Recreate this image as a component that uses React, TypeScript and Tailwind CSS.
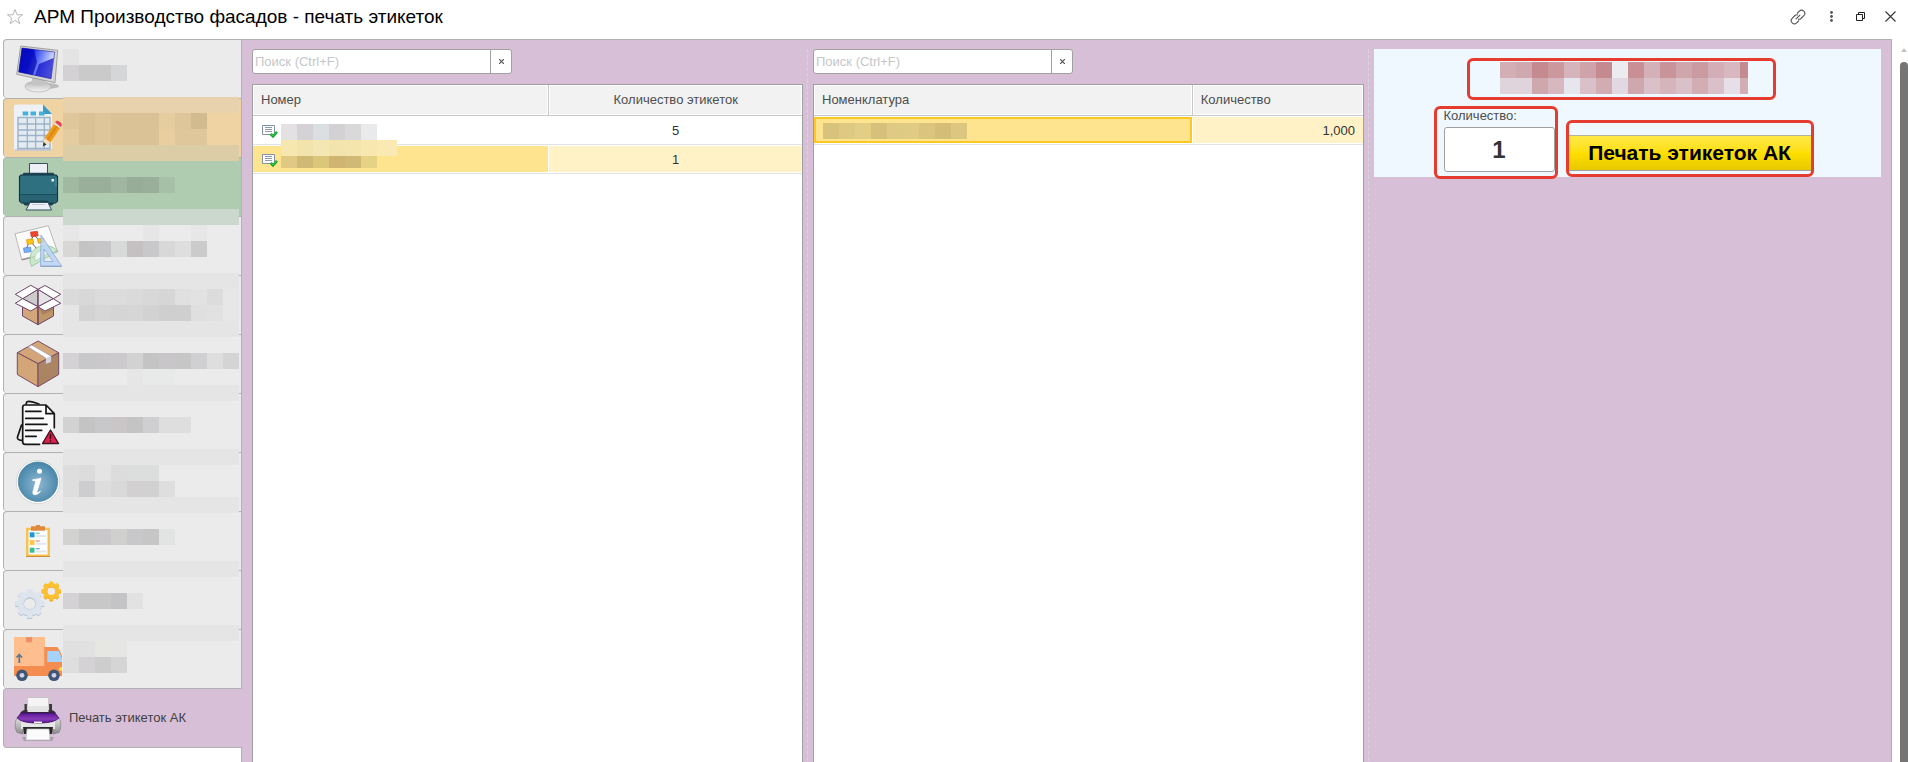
import { useState, type ReactNode } from 'react';
import clsx from 'clsx';

/* ---------- Sidebar icons ---------- */

function Icon({ children }: { children: ReactNode }) {
  return (
    <svg className="h-12 w-12 shrink-0" viewBox="0 0 48 48" fill="none" aria-hidden="true">
      {children}
    </svg>
  );
}

function MonitorIcon() {
  return (
    <Icon>
      <defs>
        <linearGradient id="screen" x1="0" y1="0" x2="1" y2="0.3">
          <stop offset="0" stopColor="#0a0ad8" />
          <stop offset="0.4" stopColor="#1022ff" />
          <stop offset="0.5" stopColor="#3a50f4" />
          <stop offset="1" stopColor="#dfe6ff" />
        </linearGradient>
        <linearGradient id="stand" x1="0" y1="0" x2="0" y2="1">
          <stop offset="0" stopColor="#b4b4b4" />
          <stop offset="1" stopColor="#f4f4f4" />
        </linearGradient>
      </defs>
      <ellipse cx="32" cy="41" rx="13" ry="3" fill="#9b9b9b" opacity="0.6" />
      <ellipse cx="24" cy="41.5" rx="13" ry="5.5" fill="url(#stand)" stroke="#a8a8a8" strokeWidth="0.6" />
      <path d="M18 33h13l1 6c-4 2-11 2-14 0z" fill="#c4c4c4" />
      <path d="M6.7 1l37 4.3-2.7 32.4-38.3-8.4z" fill="#d6d6d6" stroke="#8f8f8f" strokeWidth="0.8" />
      <path d="M8 3l32.7 4-3.7 26.7L4.7 27z" fill="url(#screen)" stroke="#22228a" strokeWidth="0.6" />
      <path d="M8 3l12 1.5L23 17l-4 13-14.300-3z" fill="#0505a8" opacity="0.65" />
      <path d="M25 19l14.500-6-2.500 20.700-16-3.400z" fill="#0707c8" opacity="0.7" />
    </Icon>
  );
}

function SheetIcon() {
  return (
    <Icon>
      <path d="M2 0.500h27l9 9.500v35a2 2 0 0 1-2 2H2a2 2 0 0 1-2-2v-42.500a2 2 0 0 1 2-2z" fill="#eef1f5" />
      <path d="M1 46h36.500" stroke="#c8ccd2" strokeWidth="2" />
      <path d="M29 0.500l9 9.500h-9z" fill="#3a9cc6" />
      <path d="M8.700 7.500h5.500v4h-5.500zM16.500 7.500H22v4h-5.500zM25 7.500h5.500v4H25z" fill="#42b1de" />
      <path d="M4 13.500h32v31H4z" fill="#e3ebf2" stroke="#9db2c8" strokeWidth="1.400" />
      <path d="M13.300 13.500v31M21.700 13.500v31M30.300 13.500v31M4 20h32M4 26h32M4 31.500h32M4 37.500h32" stroke="#9db2c8" strokeWidth="1.300" />
      <path d="M30.500 34l9.500-14 6 4-9.500 14.500z" fill="#f09a1c" />
      <path d="M33.500 36l9.500-14" stroke="#d88410" strokeWidth="1.500" />
      <path d="M30.500 34l6 4.500-7.500 3.500z" fill="#f6dcb8" />
      <path d="M29.500 38l3 2.500-3.700 2z" fill="#30302f" />
      <path d="M40 20l1-1.700 6 4-1 1.700z" fill="#dfe3e8" />
      <path d="M41 18.300c1-1.800 2.500-2 4-1s3.500 2.500 2.500 4.700l-.8 1z" fill="#e5444e" />
    </Icon>
  );
}

function PlotterIcon() {
  return (
    <Icon>
      <path d="M15.500 0.500h18v12h-18z" fill="#ecf0f6" stroke="#34505f" strokeWidth="1" />
      <path d="M9.500 9.800h30l1.500 3H8z" fill="#1d4656" />
      <path d="M7 12h35l1.500 1.500v24.500l-2 2H7.500l-2-2V13.500z" fill="#2f7080" stroke="#143445" strokeWidth="1.200" />
      <path d="M6 31.500h37v6l-2 2.500H8l-2-2.500z" fill="#286273" />
      <path d="M6 31.500h37" stroke="#1c4d5d" />
      <path d="M8 39.500h33l-3 3H11z" fill="#17404f" />
      <path d="M16 37.500h18l1 2H15z" fill="#17404f" />
      <path d="M16 39.500h18l3.500 7.500H12z" fill="#ecf0f6" stroke="#34505f" strokeWidth="1" />
      <path d="M18 41.500h13" stroke="#c0cad8" />
      <path d="M37.500 16h2.500v2.500h-2.500z" fill="#e6f4f8" />
      <path d="M42 15v8" stroke="#5895a5" />
    </Icon>
  );
}

function DesignIcon() {
  return (
    <Icon>
      <path d="M1 11.700l33.300-8 9 25.300-35.600 8.300z" fill="#fbfbfb" stroke="#b9b9b9" />
      <path d="M7.700 37.800l36-8.500" stroke="#8d8d8d" strokeWidth="1.200" />
      <path d="M20 13l-4 7M20 13l6 6M15 20l-3 8M17 20l6 7" stroke="#555" strokeWidth="0.900" />
      <path d="M16.500 10l7-.8.700 4.800-7 .8z" fill="#f3452a" stroke="#c8341c" strokeWidth="0.600" />
      <path d="M12.500 17.700l6.500-.7.700 4.600-6.500.8z" fill="#ffc20e" stroke="#c99206" strokeWidth="0.600" />
      <path d="M23.500 16.800l6-.6.600 4.400-6 .6z" fill="#ffc20e" stroke="#c99206" strokeWidth="0.600" />
      <path d="M9.500 26l7-.8.700 4.600-7 .8z" fill="#7ab0f5" stroke="#3f78c8" strokeWidth="0.600" />
      <path d="M17.500 44.500c-4-9 0-17 7-19.500s15-1 19 4z" fill="#c5e6c5" fillOpacity="0.800" stroke="#8fc490" strokeWidth="0.800" />
      <path d="M21 39c-1-5 1-9 5-10s8-.5 10 1.500z" fill="#f4f8f4" stroke="#9bcb9c" strokeWidth="0.600" />
      <path fillRule="evenodd" d="M27 13l20.500 31H26.500zM30 27v12.500h9z" fill="#bcd3f4" fillOpacity="0.850" stroke="#85a9dc" strokeWidth="0.800" />
      <path d="M26.500 44.500h21" stroke="#8da6c6" />
    </Icon>
  );
}

function OpenBoxIcon() {
  return (
    <Icon>
      <g stroke="#6e4769" strokeWidth="1" strokeLinejoin="round">
        <path d="M8.500 20L24 25.700v18L8.500 35z" fill="#d2a679" />
        <path d="M39.500 20L24 25.700v18L39.500 35z" fill="#bf956a" />
        <path d="M8.700 17.700L24 8.300v17.400z" fill="#cbcbcb" />
        <path d="M39.300 17.700L24 8.300v17.400z" fill="#e4e4e4" />
        <path d="M1.300 13.300l15.400-9L24 8.300 8.700 17.700z" fill="#fff" />
        <path d="M31 4.500l15.700 8.800-7.400 4.400L24 8.300z" fill="#fff" />
        <path d="M8.700 17.700l-7.400 4.600L16.700 30 24 25.700z" fill="#fff" />
        <path d="M39.300 17.700l7.400 4.600L31 30l-7-4.300z" fill="#fff" />
        <path d="M24 8.300v35" />
      </g>
      <path d="M24.500 27l6.500 4 8-4v2l-10 5z" fill="#9c7752" opacity="0.600" />
    </Icon>
  );
}

function ClosedBoxIcon() {
  return (
    <Icon>
      <g stroke="#7b4a68" strokeWidth="1" strokeLinejoin="round">
        <path d="M24 1l20.700 11.700L24 23.700 3.300 12.700z" fill="#d2a679" />
        <path d="M3.300 12.700L24 23.700v23L3.300 34.500z" fill="#d2a679" />
        <path d="M44.700 12.700L24 23.700v23l20.700-12.200z" fill="#ab8562" />
        <path d="M14 7l3.700-2L37 16v5.700l-5 2v-5.400z" fill="#fff" stroke="#a995ae" strokeWidth="0.800" />
      </g>
      <path d="M32 18.300l5-2.300v5.700l-5 2z" fill="#d2d2e0" />
    </Icon>
  );
}

function DocsIcon() {
  return (
    <Icon>
      <g stroke="#161616" strokeWidth="1.700" strokeLinecap="round" strokeLinejoin="round">
        <path d="M12 5l1-2.300c3-1.200 8 1 12 2.300M7.500 26L3.500 38c-.5 2 1 3.300 4 3.300" />
        <path d="M25 45.300H11a2.300 2.300 0 0 1-2.300-2.300V8.300A2.300 2.300 0 0 1 11 6h21l8.300 8.700v14L30 45z" fill="#fafafa" stroke="none" />
        <path d="M25.500 45.300H11a2.300 2.300 0 0 1-2.300-2.300V8.300A2.300 2.300 0 0 1 11 6h21l8.300 8.700v14M32 6v8.700h8.300" />
        <path d="M11.700 12.300H27M11.700 19.300h17.600M11.700 25.300H33M11.700 31.300h16M11.700 37.300h10.500" />
        <path d="M36.500 31l8 13.500H28.500z" fill="#e0204c" stroke="#3a1420" strokeWidth="1.400" />
        <path d="M36.500 35.500v4M36.500 42v.300" stroke="#2a0a12" strokeWidth="1.500" />
      </g>
    </Icon>
  );
}

function InfoIcon() {
  return (
    <Icon>
      <defs>
        <radialGradient id="info" cx="0.5" cy="0.55" r="0.55">
          <stop offset="0" stopColor="#8fb8d2" />
          <stop offset="1" stopColor="#4585a9" />
        </radialGradient>
      </defs>
      <circle cx="24" cy="24" r="21.700" fill="#fff" stroke="#d2d2d2" strokeWidth="0.800" />
      <circle cx="24" cy="23.700" r="19.700" fill="url(#info)" stroke="#5686a0" strokeWidth="0.800" />
      <circle cx="25.500" cy="13.200" r="2.500" fill="#fff" />
      <path
        d="M18.700 21.700c3-.2 5.300-.8 8.300-1.500l-4 13.300c-.4 1.700.7 1.700 3.500-.5-1.500 2.700-3.700 3.700-5.500 3.700-2 0-2.500-1.300-2-3.200l2.700-9.500c.3-1-.4-1.300-3-1.500z"
        fill="#fff"
        stroke="#fff"
        strokeWidth="0.800"
      />
    </Icon>
  );
}

function ClipboardIcon() {
  return (
    <Icon>
      <path d="M12 10.700h24V40H12z" fill="#f9c152" />
      <path d="M12 39h24v1H12z" fill="#d08b3a" />
      <path d="M14.500 13h19v24.500h-19z" fill="#fdfdfd" />
      <path d="M17 9.300h5V8h4v1.300h5v4.500H17z" fill="#de8a41" />
      <path d="M15.700 15.300h4.800v5h-4.800z" fill="#1e96d8" />
      <path d="M15.700 23h4.800v5h-4.800z" fill="#f9c94c" />
      <path d="M15.700 30.700h4.800v5h-4.800z" fill="#3abf95" />
      <path d="M21.700 16.300h4" stroke="#62cfae" strokeWidth="1.200" />
      <path d="M21.700 24h4" stroke="#ef8781" strokeWidth="1.200" />
      <path d="M21.700 31.700h4" stroke="#52abd8" strokeWidth="1.200" />
      <path d="M21.700 19h10.500M21.700 26.700h10.500M21.700 34.500h10.500" stroke="#e2e7ed" strokeWidth="2" />
    </Icon>
  );
}

const TEETH = [0, 45, 90, 135, 180, 225, 270, 315];

function GearsIcon() {
  return (
    <Icon>
      <g transform="translate(15.7 28.500)" stroke="#b7c2d0">
        <circle r="9" strokeWidth="6" />
        {TEETH.map((a) => (
          <path key={a} d="M0-11v-3.500" strokeWidth="5" transform={`rotate(${a})`} />
        ))}
      </g>
      <g transform="translate(15.7 27.500)" stroke="#dde4ee">
        <circle r="9" strokeWidth="6" />
        {TEETH.map((a) => (
          <path key={a} d="M0-11v-3.500" strokeWidth="5" transform={`rotate(${a})`} />
        ))}
      </g>
      <circle cx="15.700" cy="27.500" r="6" stroke="#c3ccd8" strokeWidth="0.700" />
      <g transform="translate(37.300 15.700)" stroke="#ea9a2a">
        <circle r="6" strokeWidth="3.800" />
        {TEETH.map((a) => (
          <path key={a} d="M0-7v-2.700" strokeWidth="3.500" transform={`rotate(${a})`} />
        ))}
      </g>
      <g transform="translate(37.300 15)" stroke="#fdc02f">
        <circle r="6" strokeWidth="4" />
        {TEETH.map((a) => (
          <path key={a} d="M0-7v-2.500" strokeWidth="3.500" transform={`rotate(${a})`} />
        ))}
      </g>
    </Icon>
  );
}

function TruckIcon() {
  return (
    <Icon>
      <path d="M0 2h31v29H0z" fill="#ffbe8e" />
      <path d="M12 2h6v5.300h-6z" fill="#ea9166" />
      <path d="M30.300 12h13L46 16l2 5v20H0V31h30.300z" fill="#f58d50" />
      <path d="M33.300 16h11.500L48 24v3H33.300z" fill="#a5d3fd" />
      <path d="M47 32h1v4h-1a2 2 0 0 1 0-4z" fill="#ffe03c" />
      <path d="M5.300 28v-7M2.500 22.500l2.800-3 2.800 3" stroke="#64788f" strokeWidth="1.800" />
      <circle cx="8" cy="40.300" r="5.800" fill="#3f5674" />
      <circle cx="8" cy="40.300" r="2.400" fill="#cfd0ea" />
      <circle cx="40" cy="40.300" r="5.800" fill="#3f5674" />
      <circle cx="40" cy="40.300" r="2.400" fill="#cfd0ea" />
    </Icon>
  );
}

function PrinterIcon() {
  return (
    <Icon>
      <defs>
        <linearGradient id="lid" x1="0" y1="0" x2="0" y2="1">
          <stop offset="0" stopColor="#571690" />
          <stop offset="0.6" stopColor="#8a3cba" />
          <stop offset="1" stopColor="#571690" />
        </linearGradient>
        <linearGradient id="metal" x1="0" y1="0" x2="0" y2="1">
          <stop offset="0" stopColor="#f3f3f3" />
          <stop offset="1" stopColor="#8b8b8b" />
        </linearGradient>
      </defs>
      <path d="M10.500 10h3v8h-3zM35 10h3v8h-3z" fill="#3a3a3a" />
      <path d="M13.300 3.500h21.400V19H13.300z" fill="#f4f4f4" stroke="#bdbdbd" strokeWidth="0.800" />
      <path d="M6 19c2-2.500 4-3 6-3h24c2 0 4 .5 6 3z" fill="#333" />
      <path d="M13.500 12h21v6h-21z" fill="#e4e4e4" />
      <path d="M6 21l-4 5c-1.500 4-1 9 1 12.500l6 1.500V27zM42 21l4 5c1.500 4 1 9-1 12.500L39 40V27z" fill="url(#metal)" stroke="#777" strokeWidth="0.600" />
      <path d="M7 27h34v8H7z" fill="#e6e6e6" />
      <path d="M9 33h30l-1 7H10z" fill="#2a2a2a" />
      <path d="M3 24l4-5h34l4 5c-3 3-8 4-11 4.500-6 .7-14 .7-20 0-3-.5-8-1.500-11-4.500z" fill="url(#lid)" stroke="#380a60" strokeWidth="0.700" />
      <path d="M20 28.300h8" stroke="#f6f6f6" strokeWidth="1.500" />
      <path d="M8 43h32l-2 4H10z" fill="#888" opacity="0.600" />
      <path d="M13 35h22l1 11H12z" fill="#fbfbfb" stroke="#bcbcbc" strokeWidth="0.700" />
    </Icon>
  );
}

/* ---------- Censored text ---------- */

type Cell = string | null;

function Mosaic({ rows, className }: { rows: Cell[][]; className?: string }) {
  return (
    <div className={clsx('pointer-events-none', className)} aria-hidden="true">
      {rows.map((row, y) => (
        <div key={y} className="flex h-4">
          {row.map((color, x) => (
            <span key={x} className="h-4 w-4 shrink-0" style={{ backgroundColor: color ?? 'transparent' }} />
          ))}
        </div>
      ))}
    </div>
  );
}

const band = (color: string): Cell[] => Array(11).fill(color);
const none: Cell[] = [];

const SIDEBAR_MOSAIC: Cell[][] = [
  ['#e4e4e4'],
  ['#d4d1d4', '#cacaca', '#cacaca', '#d5d6d8'],
  none,
  band('#e8d2ae'),
  ['#dfc79b', '#dac196', '#dec69a', '#dbc296', '#dbc296', '#dbc296', '#e6cda0', '#dfc69a', '#d3bb90'],
  ['#e4cba0', '#dac296', '#dfc69a', '#dbc296', '#dbc296', '#dbc296', '#e9ce9f', '#e0c79b', '#e0c79b'],
  band('#dccda7'),
  none,
  ['#a1b8a1', '#99af9a', '#99af9a', '#a0b6a1', '#98ad98', '#99af9a', '#a6bfa7'],
  none,
  band('#ccd8ce'),
  ['#e7e7e8', null, null, null, null, '#e6e6e7', null, null, '#e7e7e7'],
  ['#d9d7d5', '#c4c4c5', '#c6c6c8', '#d8dada', '#c5c1c3', '#c8c8cb', '#d8d8d8', '#dedede', '#cbcbcb'],
  none,
  band('#e5e5e5'),
  ['#dadada', '#d8d8d8', '#dcdcdc', '#dcdcdc', '#dadada', '#d8d8d8', '#d6d6d6', '#e0e0e0', '#e2e2e2', '#dcdcdc', '#e7e7e7'],
  ['#e5e5e5', '#d3d3d3', '#d7d7d7', '#d5d5d5', '#d6d6d6', '#d2d2d2', '#cfcfcf', '#cfcfcf', '#dfdfdf', '#e1e1e1', '#e7e7e7'],
  band('#e5e5e5'),
  none,
  ['#d4d2d4', '#c8c8ca', '#cac8cb', '#cdcacd', '#d2d2d2', '#c4c4c4', '#c8c6c8', '#c6c6c6', '#d0d0d2', '#dedede', '#d4d4d4'],
  [null, null, null, null, '#e6e6e6', '#e8eaea', '#e8eaea'],
  band('#e5e5e5'),
  none,
  ['#d2d2d2', '#c4c4c4', '#c8c8ca', '#cac6c8', '#c4c4c4', '#cfcfd1', '#dedede', '#dedede'],
  none,
  band('#e5e5e5'),
  ['#dedede', '#dcdcdc', '#e4e4e4', '#dcdcdd', '#dcdede', '#dcdede'],
  ['#dedede', '#cdcdcf', '#dddddd', '#d9d9da', '#d3d0d2', '#d1d1d1', '#dedede'],
  band('#e5e5e5'),
  none,
  ['#d2d2d0', '#c8c8c8', '#cac8cb', '#d0d0ce', '#c8c8ca', '#c6c6c6', '#e2e4e3'],
  none,
  band('#e5e5e5'),
  none,
  ['#d4d2d4', '#c8c8c8', '#c8c8c8', '#c4c4c6', '#e2e2e2'],
  none,
  band('#e5e5e5'),
  ['#e0e0e0', '#e1e1e1', '#e6e6e3', '#e6e6e5'],
  ['#dedede', '#d4d2d4', '#cdcdcd', '#d5d5d5'],
];

const NUMBER_MOSAIC: Cell[][] = [
  ['#e3e1e3', '#d4d2d4', '#dcdfe2', '#d4d1d4', '#d9d9d9', '#e8eaec'],
  ['#f6e7af', '#f3e4ad', '#f5e7b3', '#f3e4ad', '#f4e5ae', '#f8e8b0', '#fbe9b3', '#fbe9b3'],
];

const NUMBER_MOSAIC_TAIL: Cell[][] = [['#e0c982', '#cfb974', '#dcc679', '#cfb571', '#cfb975', '#e6d284']];

const ITEM_MOSAIC: Cell[][] = [
  ['#d8c27c', '#dec983', '#e2cf85', '#d6c07b', '#dfca84', '#dfcb83', '#dbc57d', '#d4be77', '#dcc680'],
];

const TITLE_MOSAIC: Cell[][] = [
  ['#d4aeb5', '#d0a9b0', '#c48a90', '#ca989d', '#d6b4bb', '#cfa3aa', '#c48a90', '#ebebf0', '#c89094', '#d4b0b8', '#c89499', '#d0a6ad', '#ca9ba0', '#d4aeb6', '#d8b8c0', '#c48c91'],
  ['#e0d4dc', '#e0d4dc', '#cfa8ae', '#d8b8c0', '#e6e6ee', '#dac0c8', '#d2acb3', '#e2d8e2', '#cfa8af', '#dac0c8', '#d6b4bc', '#dac0c8', '#d2adb4', '#dac0c8', '#e6dfe7', '#d2adb4'],
];

/* ---------- Sidebar ---------- */

const NAV_ITEMS = [
  { icon: MonitorIcon, bg: 'bg-[#ebebeb]' },
  { icon: SheetIcon, bg: 'bg-[#efd3a3]' },
  { icon: PlotterIcon, bg: 'bg-[#afccb0]' },
  { icon: DesignIcon, bg: 'bg-[#ebebeb]' },
  { icon: OpenBoxIcon, bg: 'bg-[#ebebeb]' },
  { icon: ClosedBoxIcon, bg: 'bg-[#ebebeb]' },
  { icon: DocsIcon, bg: 'bg-[#ebebeb]' },
  { icon: InfoIcon, bg: 'bg-[#ebebeb]' },
  { icon: ClipboardIcon, bg: 'bg-[#ebebeb]' },
  { icon: GearsIcon, bg: 'bg-[#ebebeb]' },
  { icon: TruckIcon, bg: 'bg-[#ebebeb]' },
];

function Sidebar() {
  return (
    <nav className="relative flex w-[239px] shrink-0 flex-col" aria-label="Разделы">
      {NAV_ITEMS.map(({ icon: NavIcon, bg }, index) => (
        <button
          key={index}
          type="button"
          aria-label={`Раздел ${index + 1}`}
          className={clsx(
            'flex h-[59px] shrink-0 items-center rounded-l border-t border-r border-l border-[#b1b1b1] pl-[10px]',
            bg
          )}
        >
          <NavIcon />
        </button>
      ))}
      <button
        type="button"
        aria-current="page"
        className="flex h-[60px] shrink-0 items-center gap-[7px] rounded-l border-t border-b border-l border-[#b1b1b1] bg-[#d8bfd8] pl-[10px] text-[#3f3f3f]"
      >
        <PrinterIcon />
        Печать этикеток АК
      </button>
      <div className="flex-1 border-r border-[#b1b1b1]" />
      <Mosaic rows={SIDEBAR_MOSAIC} className="absolute top-[10px] left-[60px]" />
    </nav>
  );
}

/* ---------- Lists ---------- */

function SearchBox({ label }: { label: string }) {
  const [value, setValue] = useState('');

  return (
    <div className="flex h-[25px] w-[260px] rounded-[3px] border border-[#a0a0a0] bg-white">
      <input
        type="text"
        value={value}
        onChange={(e) => setValue(e.target.value)}
        placeholder="Поиск (Ctrl+F)"
        aria-label={label}
        className="min-w-0 flex-1 px-0.5 outline-none placeholder:text-[#c6c6c9]"
      />
      <button
        type="button"
        onClick={() => setValue('')}
        aria-label="Очистить"
        className="flex w-[21px] items-center justify-center border-l border-[#a0a0a0] pb-px"
      >
        <svg className="h-[5px] w-[5px]" viewBox="0 0 5 5" stroke="#555" strokeWidth="1.2">
          <path d="M0 0l5 5M5 0L0 5" />
        </svg>
      </button>
    </div>
  );
}

function HeadCell({ children, className }: { children: string; className?: string }) {
  return (
    <th className={clsx('h-[31px] border-b border-[#c9c9c9] p-px font-normal', className)}>
      <div className="flex h-7 items-center bg-[#f2f2f2] px-[7px]">
        <span className="w-full">{children}</span>
      </div>
    </th>
  );
}

function DocumentIcon() {
  return (
    <svg className="h-[13px] w-4 shrink-0" viewBox="0 0 16 13" fill="none" aria-hidden="true">
      <path d="M.500.500h12v9H.500z" fill="#fff" stroke="#8393a6" />
      <path d="M3 2.500h7M3 4.500h7M3 6.500h7" stroke="#8d9aab" />
      <path d="M8.500 8.800l2.500 2.500 4-4.500" stroke="#18a02c" strokeWidth="2.600" />
      <path d="M9 9l2 2 3.500-4" stroke="#48d65a" strokeWidth="0.800" />
    </svg>
  );
}

function Splitter() {
  return (
    <div className="pl-1">
      <div className="h-full w-px bg-[repeating-linear-gradient(to_bottom,#d6d6d6_0px,#d6d6d6_4px,transparent_4px,transparent_6px)]" />
    </div>
  );
}

function NumbersList() {
  return (
    <section className="flex min-w-0 flex-col gap-[10px]">
      <SearchBox label="Поиск по номерам" />
      <div className="flex-1 border-t border-r border-l border-[#a0a0a0] bg-white">
        <table className="w-full table-fixed border-separate border-spacing-0">
          <thead>
            <tr className="text-[#4d4d4d]">
              <HeadCell className="w-[54%] border-r text-left">Номер</HeadCell>
              <HeadCell className="text-center">Количество этикеток</HeadCell>
            </tr>
          </thead>
          <tbody className="text-[#333]">
            <tr>
              <td className="relative h-[29px] border-b border-[#e3e3e3] py-px pr-px pl-0">
                <div className="flex h-[26px] items-center pt-0.5 pl-[9px]">
                  <DocumentIcon />
                </div>
                <Mosaic rows={NUMBER_MOSAIC} className="absolute top-2 left-7 z-10 w-[116px] overflow-hidden" />
              </td>
              <td className="border-b border-[#e3e3e3] px-0 py-px text-center">
                <div className="flex h-[26px] items-center justify-center pt-0.5">5</div>
              </td>
            </tr>
            <tr>
              <td className="relative h-[29px] border-b border-[#e3e3e3] py-px pr-px pl-0">
                <div className="flex h-[26px] items-center bg-[#ffe48f] pt-0.5 pl-[9px]">
                  <DocumentIcon />
                </div>
                <Mosaic rows={NUMBER_MOSAIC_TAIL} className="absolute top-[11px] left-7 h-3 overflow-hidden" />
              </td>
              <td className="border-b border-[#e3e3e3] px-0 py-px text-center">
                <div className="flex h-[26px] items-center justify-center bg-[#fff2c6] pt-0.5">1</div>
              </td>
            </tr>
          </tbody>
        </table>
      </div>
    </section>
  );
}

function ItemsList() {
  return (
    <section className="flex min-w-0 flex-col gap-[10px]">
      <SearchBox label="Поиск по номенклатуре" />
      <div className="flex-1 border-t border-r border-l border-[#a0a0a0] bg-white">
        <table className="w-full table-fixed border-separate border-spacing-0">
          <thead>
            <tr className="text-[#4d4d4d]">
              <HeadCell className="w-[69%] border-r text-left">Номенклатура</HeadCell>
              <HeadCell className="text-left">Количество</HeadCell>
            </tr>
          </thead>
          <tbody className="text-[#333]">
            <tr>
              <td className="relative h-[29px] border-b border-[#e3e3e3] py-px pr-px pl-0">
                <div className="h-[26px] border-2 border-[#fdc821] bg-[#ffe48f]" />
                <Mosaic rows={ITEM_MOSAIC} className="absolute top-[7px] left-[9px]" />
              </td>
              <td className="border-b border-[#e3e3e3] px-0 py-px">
                <div className="flex h-[26px] items-center justify-end bg-[#fff2c6] pt-0.5 pr-2">1,000</div>
              </td>
            </tr>
          </tbody>
        </table>
      </div>
    </section>
  );
}

/* ---------- Print panel ---------- */

function PrintPanel() {
  const [quantity, setQuantity] = useState('1');

  return (
    <section className="flex h-32 min-w-0 flex-col items-center gap-[6px] bg-[#f0f8ff] pt-[9px]">
      <div className="mr-3 flex h-[42px] w-[309px] shrink-0 justify-center rounded-md border-[3px] border-[#e63c30] pt-px pl-1">
        <Mosaic rows={TITLE_MOSAIC} className="w-[248px] overflow-hidden" />
      </div>
      <div className="mr-2 flex shrink-0 items-start gap-2">
        <div className="flex h-[73px] w-[124px] flex-col rounded-md border-[3px] border-[#e63c30] pl-[7px]">
          <label htmlFor="quantity" className="h-[18px] leading-[14px] text-[#4d4d4d]">
            Количество:
          </label>
          <input
            id="quantity"
            type="text"
            value={quantity}
            onChange={(e) => setQuantity(e.target.value)}
            className="h-[45px] w-full rounded-[3px] border border-[#a0a0a0] bg-white text-center text-2xl font-bold text-[#333] outline-none"
          />
        </div>
        <div className="mt-[14px] h-[57px] w-[248px] rounded-md border-[3px] border-[#e63c30] pt-3">
          <button
            type="button"
            className="flex h-9 w-full items-center justify-center border-t border-b border-t-[#b3b3a0] border-b-[#a0a0a0] bg-linear-to-b from-[#ffe944] via-[#ffdf00] to-[#e6c800] text-[21px] leading-6 font-bold whitespace-nowrap text-black"
          >
            Печать этикеток АК
          </button>
        </div>
      </div>
    </section>
  );
}

/* ---------- Window ---------- */

function TitleBar() {
  return (
    <header className="flex h-[39px] shrink-0 items-center pr-3 pb-[6px] pl-[6px]">
      <button type="button" aria-label="Добавить в избранное">
        <svg className="h-[18px] w-[18px]" viewBox="0 0 18 18" fill="none" stroke="#b4b8bd">
          <path d="M9 1.500l2 5.300h5.600l-4.500 3.400 1.700 5.500L9 12.400l-4.800 3.300 1.700-5.500L1.400 6.800H7z" />
        </svg>
      </button>
      <h1 className="ml-[10px] text-[19px] text-black">АРМ Производство фасадов - печать этикеток</h1>
      <div className="ml-auto flex items-center gap-5 text-[#555]">
        <button type="button" aria-label="Получить ссылку">
          <svg className="h-4 w-4" viewBox="0 0 16 16" fill="none" stroke="currentColor" strokeWidth="1.100">
            <path d="M7 4.500l2.300-2.300a3 3 0 0 1 4.500 4.500L11 9.500a3 3 0 0 1-3 .500M9 11.500l-2.300 2.300a3 3 0 0 1-4.500-4.500L5 6.500A3 3 0 0 1 8 6" />
            <path d="M5.800 10.200l4.400-4.400" />
          </svg>
        </button>
        <button type="button" aria-label="Меню" className="flex w-[10px] justify-center">
          <svg className="h-[11px] w-[3px]" viewBox="0 0 3 11" fill="currentColor">
            <circle cx="1.500" cy="1.500" r="1.400" />
            <circle cx="1.500" cy="5.500" r="1.400" />
            <circle cx="1.500" cy="9.500" r="1.400" />
          </svg>
        </button>
        <button type="button" aria-label="Восстановить">
          <svg className="h-[9px] w-[9px]" viewBox="0 0 9 9" fill="none" stroke="#222">
            <path d="M.500 2.500h6v6h-6zM2.500 2.500v-2h6v6h-2" />
          </svg>
        </button>
        <button type="button" aria-label="Закрыть">
          <svg className="h-[11px] w-[11px]" viewBox="0 0 11 11" stroke="#333" strokeWidth="1.100">
            <path d="M.500.500l10 10M10.500.500l-10 10" />
          </svg>
        </button>
      </div>
    </header>
  );
}

export default function App() {
  return (
    <div className="flex h-screen flex-col overflow-hidden bg-white font-['Liberation_Sans',Arial,sans-serif] text-[13px] leading-4">
      <TitleBar />
      <div className="flex min-h-0 flex-1 pl-[3px]">
        <Sidebar />
        <main className="grid min-w-0 flex-1 grid-cols-[551fr_10px_551fr_10px_507fr] border-t border-r border-[#b1b1b1] bg-[#d8bfd8] px-[10px] pt-[9px]">
          <NumbersList />
          <Splitter />
          <ItemsList />
          <Splitter />
          <PrintPanel />
        </main>
        {/* Scrollbar */}
        <div className="flex w-4 shrink-0 flex-col items-end pt-[9px]" aria-hidden="true">
          <svg className="mr-px h-[4px] w-[6px]" viewBox="0 0 6 4" fill="#c4c4c4">
            <path d="M3 0l3 4H0z" />
          </svg>
          <div className="mt-[10px] w-2 flex-1 rounded-t bg-[#757575]" />
        </div>
      </div>
    </div>
  );
}
